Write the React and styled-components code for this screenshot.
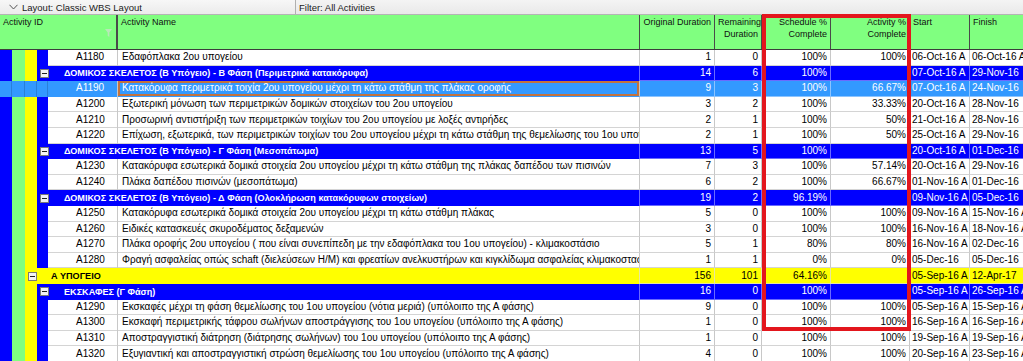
import styled, { createGlobalStyle, css } from 'styled-components';

const GlobalStyle = createGlobalStyle`
    html, body {
        margin: 0;
        padding: 0;
        background: #ffffff;
        overflow: hidden;
    }
    body {
        font-family: 'Liberation Sans', Arial, sans-serif;
        font-size: 10px;
        color: #000;
    }
`;

const BLUE = '#0000ff';
const GREEN = '#80ff80';
const YELLOW = '#ffff00';
const SELECTED = '#3399ff';

const COLS = '118px 522px 75px 47px 69px 79px 60px 70px';
const ROW_H = '15.6px';

const BAND_W = [12, 13, 12, 11];
const BAND_COLORS = [BLUE, GREEN, YELLOW, BLUE];

const Page = styled.div`
    position: relative;
    width: 1023px;
    height: 361px;
    overflow: hidden;
`;

const Toolbar = styled.div`
    display: flex;
    height: 15px;
    box-sizing: border-box;
    background: linear-gradient(#f7f7f7, #ebebeb);
    border-bottom: 1px solid #b4b4b4;
    font-size: 9.5px;
    color: #1a1a1a;
`;

const ToolbarSection = styled.div`
    display: flex;
    align-items: center;
    gap: 4px;
    width: ${(p) => p.width || 'auto'};
    flex: ${(p) => (p.grow ? 1 : 'none')};
    padding-left: ${(p) => p.pad || '3px'};
    box-sizing: border-box;
    border-right: ${(p) => (p.divider ? '1px solid #b0b0b0' : 'none')};
    background: ${(p) => (p.grow ? 'linear-gradient(#f4f4f4, #e9e9e9)' : 'transparent')};
`;

const Chevron = styled.svg`
    width: 9px;
    height: 6px;
`;

const Grid = styled.div`
    display: grid;
    grid-template-columns: ${COLS};
`;

const Header = styled(Grid)`
    height: 35px;
    background: ${GREEN};
    border-bottom: 1px solid #3c3c3c;
    box-sizing: border-box;
`;

const HeadCell = styled.div`
    position: relative;
    padding: 2px 3px 0 3px;
    border-right: ${(p) => (p.thick ? '2px' : '1px')} solid #4a4a4a;
    text-align: ${(p) => p.align || 'left'};
    font-size: 9px;
    line-height: 11.5px;
    color: #101010;
    box-sizing: border-box;
    white-space: pre;
    overflow: hidden;
`;

const FilterIcon = styled.svg`
    position: absolute;
    right: 4px;
    top: 14px;
    width: 7px;
    height: 8px;
`;

const Row = styled(Grid)`
    height: ${ROW_H};
    font-size: 10px;
    line-height: 14px;
`;

const cellBase = css`
    box-sizing: border-box;
    overflow: hidden;
    white-space: nowrap;
    display: flex;
    align-items: center;
`;

const IdCell = styled.div`
    ${cellBase}
    border-right: 1px solid #c8c8c8;
`;

const Bands = styled.div`
    display: flex;
    height: 100%;
    flex: none;
`;

const Band = styled.div`
    width: ${(p) => p.w}px;
    height: 100%;
    background: ${(p) => p.color};
    box-sizing: border-box;
    border-right: ${(p) => (p.selected ? '1px solid #2a7fd8' : 'none')};
`;

const IdText = styled.div`
    flex: 1;
    height: 100%;
    display: flex;
    align-items: center;
    padding-left: 28px;
    box-sizing: border-box;
    background: ${(p) => (p.selected ? SELECTED : '#fff')};
    color: ${(p) => (p.selected ? '#fff' : '#000')};
    border-bottom: 1px solid ${(p) => (p.selected ? SELECTED : '#d4d4d4')};
`;

const NameCell = styled.div`
    ${cellBase}
    padding-left: 4px;
    background: ${(p) => (p.selected ? SELECTED : '#fff')};
    color: ${(p) => (p.selected ? '#fff' : '#000')};
    border-right: 1px solid #c8c8c8;
    border-bottom: 1px solid ${(p) => (p.selected ? SELECTED : '#d4d4d4')};
    box-shadow: ${(p) => (p.selected ? 'inset 0 0 0 2px #c2733e' : 'none')};
`;

const ValueCell = styled.div`
    ${cellBase}
    justify-content: ${(p) => (p.left ? 'flex-start' : 'flex-end')};
    padding: ${(p) => (p.left ? '0 0 0 2px' : '0 3px 0 0')};
    background: ${(p) => p.bg || '#fff'};
    color: ${(p) => p.fg || '#000'};
    border-right: 1px solid ${(p) => p.line || '#c8c8c8'};
    border-bottom: 1px solid ${(p) => p.line || '#d4d4d4'};
`;

const GroupTitleCell = styled.div`
    ${cellBase}
    grid-column: 1 / 3;
    background: ${(p) => p.bg};
    color: ${(p) => p.fg};
    font-weight: bold;
    font-size: 9.1px;
    border-right: 1px solid ${(p) => p.line};
`;

const Toggle = styled.div`
    flex: none;
    width: 7px;
    height: 7px;
    margin: 0 ${(p) => p.gap}px 0 3px;
    background: #f4f4f4;
    border: 1px solid #7a7a7a;
    position: relative;
    &::after {
        content: '';
        position: absolute;
        left: 1px;
        right: 1px;
        top: 3px;
        height: 1px;
        background: #202020;
    }
`;

const RedFrame = styled.div`
    position: absolute;
    left: 762px;
    top: 14px;
    width: 149px;
    height: 317px;
    box-sizing: border-box;
    border: 4px solid #e3161d;
    pointer-events: none;
`;

const rows = [
    { id: 'A1180', name: 'Εδαφόπλακα 2ου υπογείου', od: 1, rd: 0, sp: '100%', ap: '100%', start: '06-Oct-16 A', finish: '06-Oct-16 A' },
    { wbs: 4, name: 'ΔΟΜΙΚΟΣ ΣΚΕΛΕΤΟΣ (Β Υπόγειο) - Β Φάση (Περιμετρικά κατακόρυφα)', od: 14, rd: 6, sp: '100%', start: '07-Oct-16 A', finish: '29-Nov-16' },
    { id: 'A1190', selected: true, name: 'Κατακόρυφα περιμετρικά τοιχία 2ου υπογείου μέχρι τη κάτω στάθμη της πλάκας οροφής', od: 9, rd: 3, sp: '100%', ap: '66.67%', start: '07-Oct-16 A', finish: '24-Nov-16' },
    { id: 'A1200', name: 'Εξωτερική μόνωση των περιμετρικών δομικών στοιχείων του 2ου υπογείου', od: 3, rd: 2, sp: '100%', ap: '33.33%', start: '20-Oct-16 A', finish: '28-Nov-16' },
    { id: 'A1210', name: 'Προσωρινή αντιστήριξη των περιμετρικών τοιχίων του 2ου υπογείου με λοξές αντιρήδες', od: 2, rd: 1, sp: '100%', ap: '50%', start: '21-Oct-16 A', finish: '28-Nov-16' },
    { id: 'A1220', name: 'Επίχωση, εξωτερικά, των περιμετρικών τοιχίων του 2ου υπογείου μέχρι τη κάτω στάθμη της θεμελίωσης του 1ου υπογείου', od: 2, rd: 1, sp: '100%', ap: '50%', start: '25-Oct-16 A', finish: '29-Nov-16' },
    { wbs: 4, name: 'ΔΟΜΙΚΟΣ ΣΚΕΛΕΤΟΣ (Β Υπόγειο) - Γ Φάση (Μεσοπάτωμα)', od: 13, rd: 5, sp: '100%', start: '20-Oct-16 A', finish: '01-Dec-16' },
    { id: 'A1230', name: 'Κατακόρυφα εσωτερικά δομικά στοιχεία 2ου υπογείου μέχρι τη κάτω στάθμη της πλάκας δαπέδου των πισινών', od: 7, rd: 3, sp: '100%', ap: '57.14%', start: '20-Oct-16 A', finish: '29-Nov-16' },
    { id: 'A1240', name: 'Πλάκα δαπέδου πισινών (μεσοπάτωμα)', od: 6, rd: 2, sp: '100%', ap: '66.67%', start: '01-Nov-16 A', finish: '01-Dec-16' },
    { wbs: 4, name: 'ΔΟΜΙΚΟΣ ΣΚΕΛΕΤΟΣ (Β Υπόγειο) - Δ Φάση (Ολοκλήρωση κατακόρυφων στοιχείων)', od: 19, rd: 2, sp: '96.19%', start: '09-Nov-16 A', finish: '05-Dec-16' },
    { id: 'A1250', name: 'Κατακόρυφα εσωτερικά δομικά στοιχεία 2ου υπογείου μέχρι τη κάτω στάθμη πλάκας', od: 5, rd: 0, sp: '100%', ap: '100%', start: '09-Nov-16 A', finish: '15-Nov-16 A' },
    { id: 'A1260', name: 'Ειδικές κατασκευές σκυροδέματος δεξαμενών', od: 3, rd: 0, sp: '100%', ap: '100%', start: '16-Nov-16 A', finish: '18-Nov-16 A' },
    { id: 'A1270', name: 'Πλάκα οροφής 2ου υπογείου ( που είναι συνεπίπεδη με την εδαφόπλακα του 1ου υπογείου) - κλιμακοστάσιο', od: 5, rd: 1, sp: '80%', ap: '80%', start: '16-Nov-16 A', finish: '02-Dec-16' },
    { id: 'A1280', name: 'Φραγή ασφαλείας οπώς schaft (διελεύσεων Η/Μ) και φρεατίων ανελκυστήρων και κιγκλίδωμα ασφαλείας κλιμακοστασίου', od: 1, rd: 1, sp: '0%', ap: '0%', start: '05-Dec-16', finish: '05-Dec-16' },
    { wbs: 3, name: 'Α ΥΠΟΓΕΙΟ', od: 156, rd: 101, sp: '64.16%', start: '05-Sep-16 A', finish: '12-Apr-17' },
    { wbs: 4, name: 'ΕΚΣΚΑΦΕΣ (Γ Φάση)', od: 16, rd: 0, sp: '100%', start: '05-Sep-16 A', finish: '26-Sep-16 A' },
    { id: 'A1290', name: 'Εκσκαφές μέχρι τη φάση θεμελίωσης του 1ου υπογείου (νότια μεριά) (υπόλοιπο της Α φάσης)', od: 9, rd: 0, sp: '100%', ap: '100%', start: '05-Sep-16 A', finish: '15-Sep-16 A' },
    { id: 'A1300', name: 'Εκσκαφή περιμετρικής τάφρου σωλήνων αποστράγγισης του 1ου υπογείου (υπόλοιπο της Α φάσης)', od: 1, rd: 0, sp: '100%', ap: '100%', start: '16-Sep-16 A', finish: '16-Sep-16 A' },
    { id: 'A1310', name: 'Αποστραγγιστική διάτρηση (διάτρησης σωλήνων) του 1ου υπογείου (υπόλοιπο της Α φάσης)', od: 1, rd: 0, sp: '100%', ap: '100%', start: '19-Sep-16 A', finish: '19-Sep-16 A' },
    { id: 'A1320', name: 'Εξυγιαντική και αποστραγγιστική στρώση θεμελίωσης του 1ου υπογείου (υπόλοιπο της Α φάσης)', od: 4, rd: 0, sp: '100%', ap: '100%', start: '20-Sep-16 A', finish: '23-Sep-16 A' },
];

const ActivityRow = ({ row }) => {
    const sel = row.selected;
    const bg = sel ? SELECTED : '#fff';
    const fg = sel ? '#fff' : '#000';
    const line = sel ? '#8cc4ff' : undefined;
    return (
        <Row>
            <IdCell>
                <Bands>
                    {BAND_W.map((w, i) => (
                        <Band key={i} w={w} selected={sel} color={sel ? SELECTED : BAND_COLORS[i]} />
                    ))}
                </Bands>
                <IdText selected={sel}>{row.id}</IdText>
            </IdCell>
            <NameCell selected={sel}>{row.name}</NameCell>
            <ValueCell bg={bg} fg={fg} line={line}>{row.od}</ValueCell>
            <ValueCell bg={bg} fg={fg} line={line}>{row.rd}</ValueCell>
            <ValueCell bg={bg} fg={fg} line={line}>{row.sp}</ValueCell>
            <ValueCell bg={bg} fg={fg} line={line}>{row.ap}</ValueCell>
            <ValueCell bg={bg} fg={fg} line={line} left>{row.start}</ValueCell>
            <ValueCell bg={bg} fg={fg} line={line} left>{row.finish}</ValueCell>
        </Row>
    );
};

const WbsRow = ({ row }) => {
    const yellow = row.wbs === 3;
    const bg = yellow ? YELLOW : BLUE;
    const fg = yellow ? '#000' : '#fff';
    const line = yellow ? '#e6e6a0' : '#6a6aff';
    const bandCount = row.wbs - 1;
    return (
        <Row>
            <GroupTitleCell bg={bg} fg={fg} line={line}>
                <Bands>
                    {BAND_W.slice(0, bandCount).map((w, i) => (
                        <Band key={i} w={w} color={BAND_COLORS[i]} />
                    ))}
                </Bands>
                <Toggle gap={yellow ? 14 : 15} />
                {row.name}
            </GroupTitleCell>
            <ValueCell bg={bg} fg={fg} line={line}>{row.od}</ValueCell>
            <ValueCell bg={bg} fg={fg} line={line}>{row.rd}</ValueCell>
            <ValueCell bg={bg} fg={fg} line={line}>{row.sp}</ValueCell>
            <ValueCell bg={bg} fg={fg} line={line} />
            <ValueCell bg={bg} fg={fg} line={line} left>{row.start}</ValueCell>
            <ValueCell bg={bg} fg={fg} line={line} left>{row.finish}</ValueCell>
        </Row>
    );
};

const App = () => {
    return (
        <Page>
            <GlobalStyle />
            <Toolbar>
                <ToolbarSection width="296px" pad="9px" divider>
                    <Chevron viewBox="0 0 9 6">
                        <path d="M0.5 0.8 L4.5 5 L8.5 0.8" fill="none" stroke="#555" strokeWidth="1" />
                    </Chevron>
                    Layout: Classic WBS Layout
                </ToolbarSection>
                <ToolbarSection grow pad="3px">
                    Filter: All Activities
                </ToolbarSection>
            </Toolbar>
            <Header>
                <HeadCell thick>
                    Activity ID
                    <FilterIcon viewBox="0 0 7 8">
                        <path d="M0 0 H7 L4.3 3.5 V8 L2.7 6.8 V3.5 Z" fill="#b8e8b8" />
                    </FilterIcon>
                </HeadCell>
                <HeadCell>Activity Name</HeadCell>
                <HeadCell align="right">Original Duration</HeadCell>
                <HeadCell align="right">{'Remaining\nDuration'}</HeadCell>
                <HeadCell align="right">{'Schedule %\nComplete'}</HeadCell>
                <HeadCell align="right">{'Activity %\nComplete'}</HeadCell>
                <HeadCell>Start</HeadCell>
                <HeadCell>Finish</HeadCell>
            </Header>
            {rows.map((row, i) =>
                row.wbs ? <WbsRow key={i} row={row} /> : <ActivityRow key={i} row={row} />
            )}
            <RedFrame />
        </Page>
    );
};

export default App;
